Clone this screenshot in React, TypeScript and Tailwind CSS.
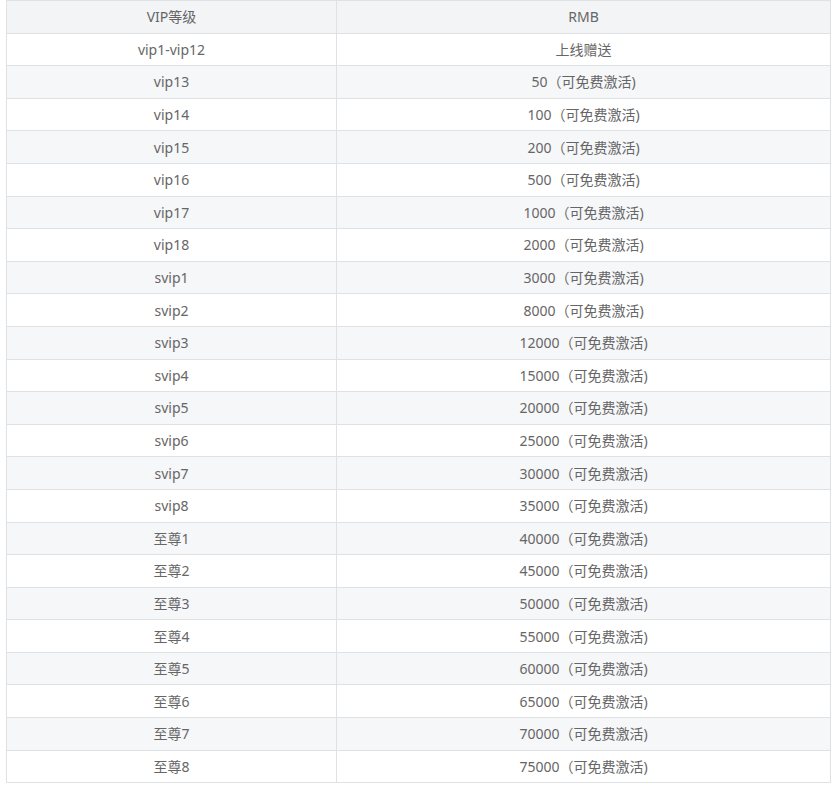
const rows: [string, string][] = [
  ['vip1-vip12', '上线赠送'],
  ['vip13', '50（可免费激活)'],
  ['vip14', '100（可免费激活)'],
  ['vip15', '200（可免费激活)'],
  ['vip16', '500（可免费激活)'],
  ['vip17', '1000（可免费激活)'],
  ['vip18', '2000（可免费激活)'],
  ['svip1', '3000（可免费激活)'],
  ['svip2', '8000（可免费激活)'],
  ['svip3', '12000（可免费激活)'],
  ['svip4', '15000（可免费激活)'],
  ['svip5', '20000（可免费激活)'],
  ['svip6', '25000（可免费激活)'],
  ['svip7', '30000（可免费激活)'],
  ['svip8', '35000（可免费激活)'],
  ['至尊1', '40000（可免费激活)'],
  ['至尊2', '45000（可免费激活)'],
  ['至尊3', '50000（可免费激活)'],
  ['至尊4', '55000（可免费激活)'],
  ['至尊5', '60000（可免费激活)'],
  ['至尊6', '65000（可免费激活)'],
  ['至尊7', '70000（可免费激活)'],
  ['至尊8', '75000（可免费激活)'],
];

const cell = 'border border-[#dfe2e5] h-[32.6px] p-0 text-center align-middle';

export default function App() {
  return (
    <div className="bg-white pl-[6px] pr-[7px] text-[14px] text-[#666]" style={{ fontFamily: '"Microsoft YaHei", "Noto Sans", "Noto Sans CJK SC", sans-serif' }}>
      <table className="w-full border-collapse">
        <thead>
          <tr className="bg-[#f3f4f6]">
            <th className={`${cell} w-[330px] font-normal`}>VIP等级</th>
            <th className={`${cell} font-normal`}>RMB</th>
          </tr>
        </thead>
        <tbody>
          {rows.map(([lv, rmb], i) => (
            <tr key={lv} className={i % 2 === 1 ? 'bg-[#f6f7f9]' : 'bg-white'}>
              <td className={cell}>{lv}</td>
              <td className={cell}>{rmb}</td>
            </tr>
          ))}
        </tbody>
      </table>
    </div>
  );
}
